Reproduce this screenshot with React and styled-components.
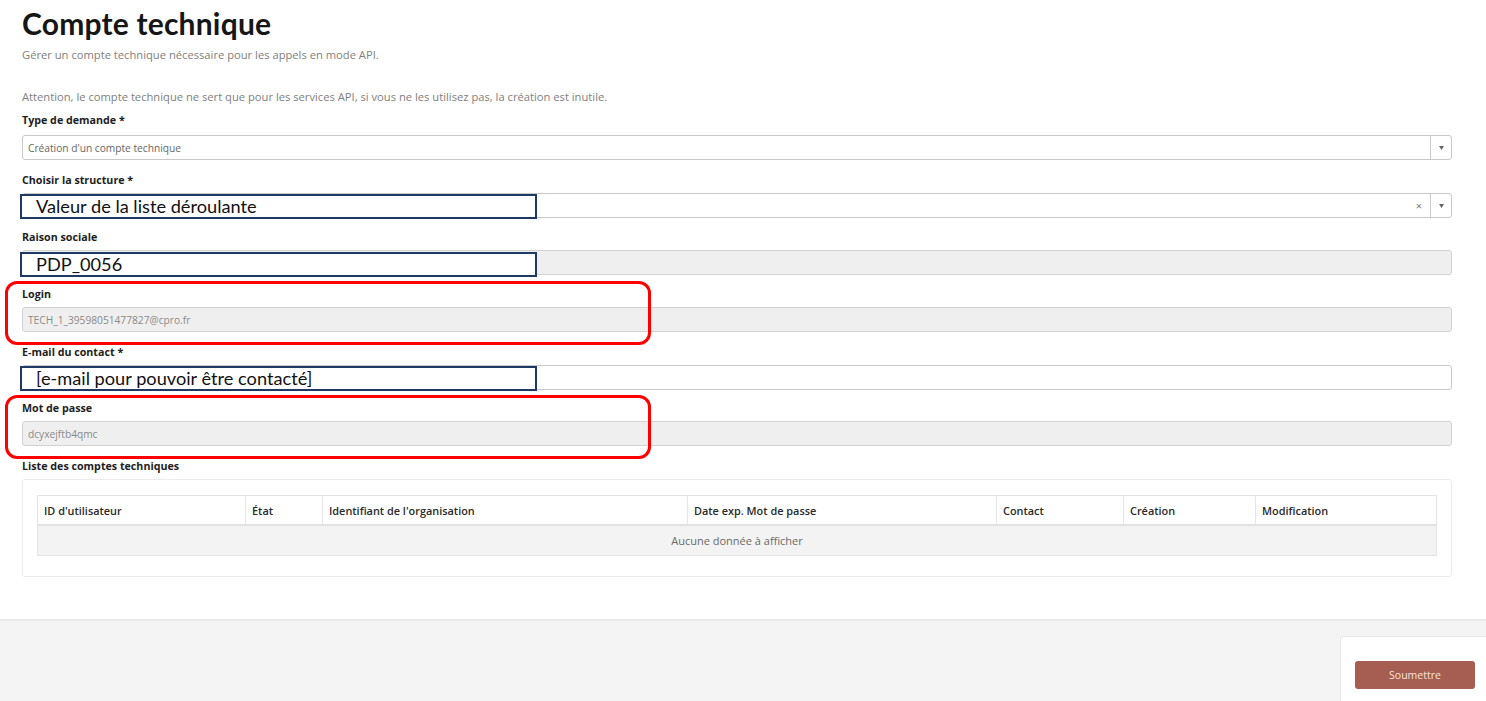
import React from 'react';
import styled, { createGlobalStyle } from 'styled-components';

const GlobalStyle = createGlobalStyle`
  html, body { margin: 0; padding: 0; background: #ffffff; }
  body { font-family: "Open Sans", "Noto Sans", sans-serif; color: #222; overflow: hidden; }
  * { box-sizing: border-box; }
`;

const Screen = styled.div`
  width: 1486px;
  height: 701px;
  display: flex;
  flex-direction: column;
  overflow: hidden;
`;

const Page = styled.div`
  padding: 4px 34px 0 22px;
  flex: 1;
`;

const Title = styled.h1`
  margin: 0;
  font-family: "Lato", "Open Sans", sans-serif;
  font-weight: 700;
  font-size: 30px;
  line-height: 38px;
  color: #161616;
  letter-spacing: 0.2px;
`;

const Lead = styled.p`
  margin: ${p => p.$top || 0}px 0 0 0;
  font-size: 11.2px;
  line-height: 14px;
  color: #808080;
`;

const Form = styled.div`
  margin-top: 9px;
  display: flex;
  flex-direction: column;
`;

const Field = styled.div`
  position: relative;
  padding-bottom: ${p => p.$after || 12}px;
`;

const Label = styled.div`
  font-size: 10.7px;
  font-weight: 700;
  line-height: 14px;
  color: #1e1e1e;
  margin-bottom: ${p => p.$gap || 6}px;
`;

const InputBox = styled.div`
  position: relative;
  height: 25px;
  display: flex;
  align-items: center;
  border: 1px solid ${p => (p.$disabled ? '#d2d2d2' : '#c9c9c9')};
  border-radius: 3px;
  background: ${p => (p.$disabled ? '#efefef' : '#ffffff')};
  font-size: 10.2px;
  color: ${p => (p.$disabled ? '#8a8a8a' : '#666666')};
  padding-left: 5px;
`;

const Value = styled.span`
  flex: 1;
`;

const ClearMark = styled.span`
  width: 22px;
  text-align: center;
  font-size: 11px;
  color: #777;
`;

const ArrowSlot = styled.span`
  width: 21px;
  height: 100%;
  border-left: 1px solid #c9c9c9;
  display: flex;
  align-items: center;
  justify-content: center;
`;

const Annotation = styled.div`
  position: absolute;
  left: -3px;
  top: ${p => p.$top || 0}px;
  width: 517px;
  height: 25px;
  border: 2px solid #1f3864;
  background: #ffffff;
  display: flex;
  align-items: center;
  padding: 0 0 2px 14px;
  font-family: "Lato", "Open Sans", sans-serif;
  font-size: 18.2px;
  color: #111;
  z-index: 2;
`;

const Highlight = styled.div`
  position: absolute;
  left: -17px;
  top: -6px;
  width: 646px;
  bottom: 0;
  border: 3px solid #ff0000;
  border-radius: 12px;
  pointer-events: none;
  z-index: 3;
`;

const Card = styled.div`
  margin-top: 6px;
  border: 1px solid #ececec;
  border-radius: 3px;
  padding: 15px 14px 20px 14px;
`;

const Grid = styled.div`
  display: grid;
  grid-template-columns: 207px 77px 365px 309px 127px 132px 1fr;
  border: 1px solid #e4e4e4;
`;

const HeadCell = styled.div`
  height: 30px;
  display: flex;
  align-items: center;
  padding-left: 6px;
  font-size: 10.9px;
  font-weight: 600;
  color: #2a2a2a;
  border-left: ${p => (p.$first ? 'none' : '1px solid #e6e6e6')};
  border-bottom: 2px solid #e2e2e2;
`;

const EmptyRow = styled.div`
  grid-column: 1 / -1;
  height: 29px;
  background: #f3f3f3;
  display: flex;
  align-items: center;
  justify-content: center;
  font-size: 11px;
  color: #6a6a6a;
`;

const Footer = styled.div`
  height: 82px;
  background: #f4f4f4;
  border-top: 2px solid #e9e9e9;
  display: flex;
  justify-content: flex-end;
  padding-top: 15px;
`;

const ActionPanel = styled.div`
  width: 146px;
  background: #ffffff;
  border-left: 1px solid #e6e6e6;
  border-top: 1px solid #e6e6e6;
  border-top-left-radius: 3px;
  padding: 24px 0 0 14px;
`;

const SubmitButton = styled.button`
  width: 120px;
  height: 28px;
  border: none;
  border-radius: 3px;
  background: #a55e51;
  color: #f6e4df;
  font-family: "Open Sans", sans-serif;
  font-size: 10.5px;
  cursor: pointer;
`;

const Caret = () => (
  <svg width="5" height="4" viewBox="0 0 5 4">
    <path d="M0 0 L5 0 L2.5 4 Z" fill="#666" />
  </svg>
);

const columns = [
  "ID d'utilisateur",
  'État',
  "Identifiant de l'organisation",
  'Date exp. Mot de passe',
  'Contact',
  'Création',
  'Modification',
];

export default function App() {
  return (
    <Screen>
      <GlobalStyle />
      <Page>
        <Title>Compte technique</Title>
        <Lead $top={6}>Gérer un compte technique nécessaire pour les appels en mode API.</Lead>
        <Lead $top={28}>
          Attention, le compte technique ne sert que pour les services API, si vous ne les utilisez pas, la création est inutile.
        </Lead>
        <Form>
          <Field $after={13}>
            <Label $gap={8}>Type de demande *</Label>
            <InputBox>
              <Value>Création d'un compte technique</Value>
              <ArrowSlot><Caret /></ArrowSlot>
            </InputBox>
          </Field>
          <Field>
            <Label>Choisir la structure *</Label>
            <InputBox>
              <Annotation>Valeur de la liste déroulante</Annotation>
              <Value />
              <ClearMark>×</ClearMark>
              <ArrowSlot><Caret /></ArrowSlot>
            </InputBox>
          </Field>
          <Field>
            <Label>Raison sociale</Label>
            <InputBox $disabled>
              <Annotation $top={1}>PDP_0056</Annotation>
              <Value />
            </InputBox>
          </Field>
          <Field $after={13}>
            <Highlight />
            <Label>Login</Label>
            <InputBox $disabled>
              <Value>TECH_1_39598051477827@cpro.fr</Value>
            </InputBox>
          </Field>
          <Field $after={11}>
            <Label>E-mail du contact *</Label>
            <InputBox>
              <Annotation $top={0}>[e-mail pour pouvoir être contacté]</Annotation>
              <Value />
            </InputBox>
          </Field>
          <Field $after={13}>
            <Highlight />
            <Label>Mot de passe</Label>
            <InputBox $disabled>
              <Value>dcyxejftb4qmc</Value>
            </InputBox>
          </Field>
          <div>
            <Label $gap={0}>Liste des comptes techniques</Label>
            <Card>
              <Grid>
                {columns.map((c, i) => (
                  <HeadCell key={c} $first={i === 0}>{c}</HeadCell>
                ))}
                <EmptyRow>Aucune donnée à afficher</EmptyRow>
              </Grid>
            </Card>
          </div>
        </Form>
      </Page>
      <Footer>
        <ActionPanel>
          <SubmitButton>Soumettre</SubmitButton>
        </ActionPanel>
      </Footer>
    </Screen>
  );
}
